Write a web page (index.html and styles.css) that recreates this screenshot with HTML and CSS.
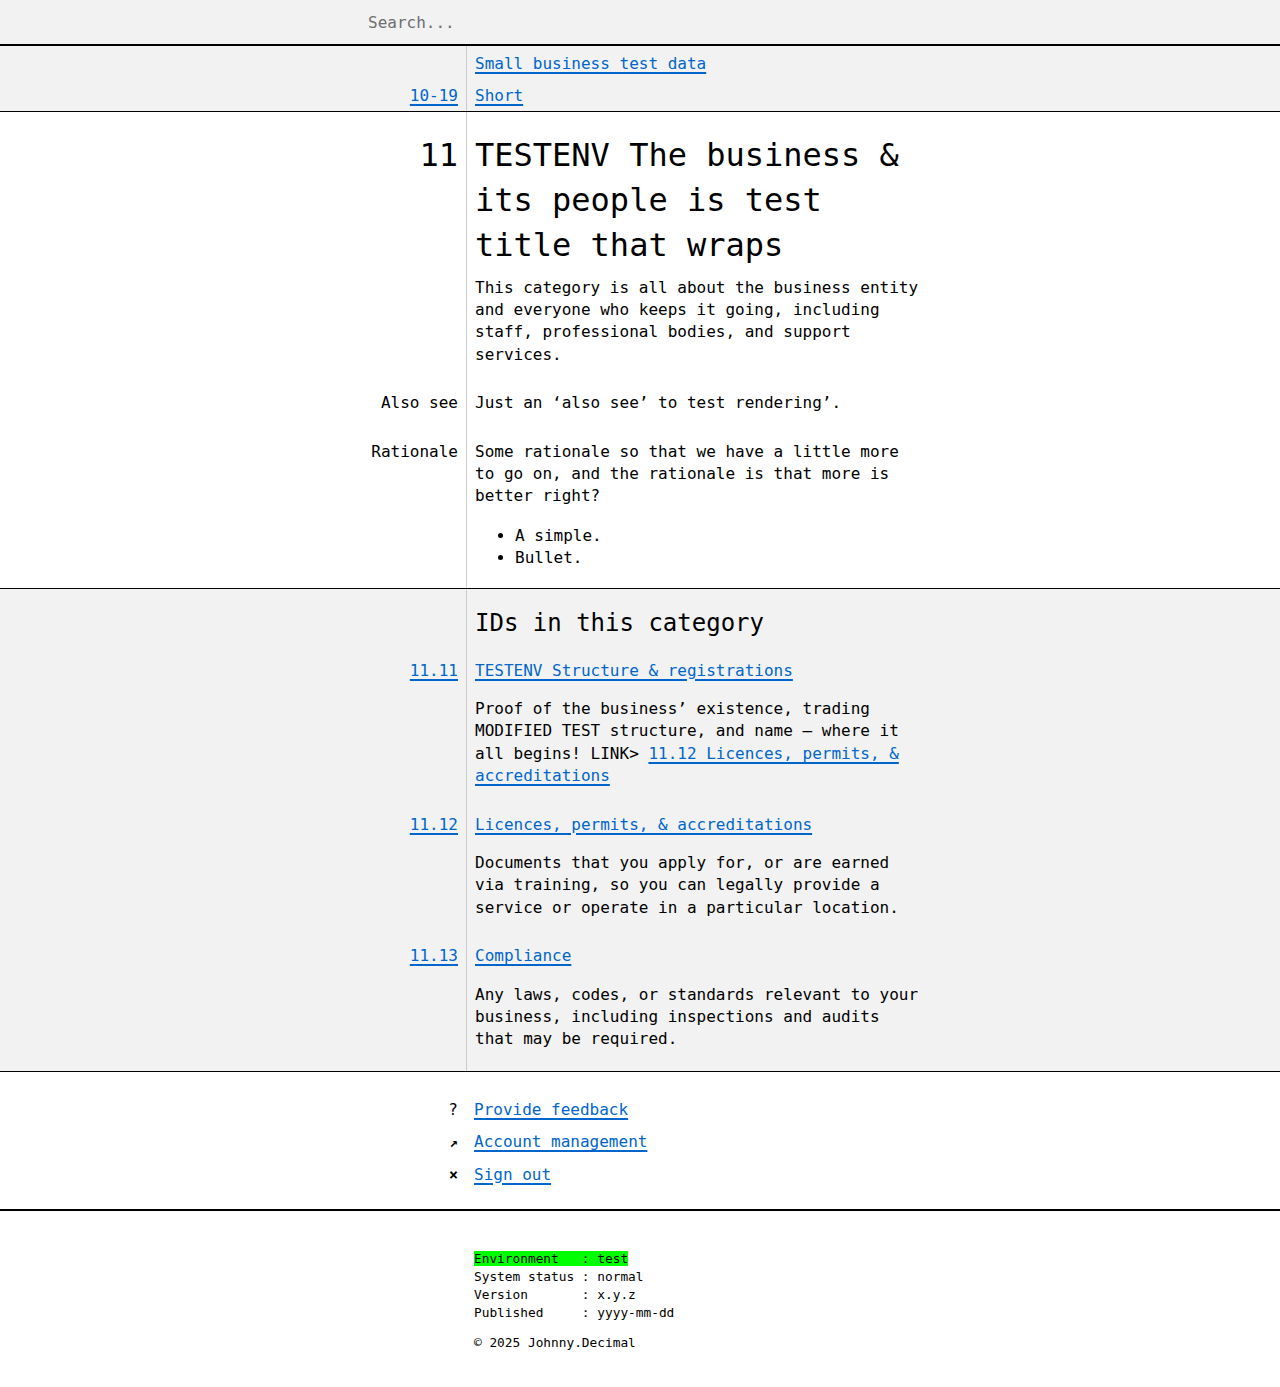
FILE: index.html
```html
<!DOCTYPE html>
<html lang="en">
<head>
<meta charset="utf-8">
<title>11 TESTENV The business &amp; its people</title>
<link rel="stylesheet" href="styles.css">
</head>
<body>
<header class="search">
  <input class="search-input" type="text" placeholder="Search...">
</header>

<nav class="crumbs">
  <div class="row crumb-row">
    <div class="key"></div>
    <div class="val"><a href="#">Small business test data</a></div>
  </div>
  <div class="row crumb-row">
    <div class="key"><a href="#">10-19</a></div>
    <div class="val"><a href="#">Short</a></div>
  </div>
</nav>

<main>
  <section class="category">
    <div class="row">
      <div class="key num-big">11</div>
      <div class="val">
        <h1 class="title">TESTENV The business &amp; its people is test title that wraps</h1>
        <p class="desc">This category is all about the business entity and everyone who keeps it going, including staff, professional bodies, and support services.</p>
      </div>
    </div>
    <div class="row meta-row">
      <div class="key">Also see</div>
      <div class="val"><p class="plain">Just an ‘also see’ to test rendering’.</p></div>
    </div>
    <div class="row meta-row">
      <div class="key">Rationale</div>
      <div class="val">
        <p class="plain">Some rationale so that we have a little more to go on, and the rationale is that more is better right?</p>
        <ul class="bullets">
          <li>A simple.</li>
          <li>Bullet.</li>
        </ul>
      </div>
    </div>
  </section>

  <section class="ids">
    <div class="row">
      <div class="key"></div>
      <div class="val"><h2 class="ids-title">IDs in this category</h2></div>
    </div>
    <div class="row id-row first">
      <div class="key"><a href="#">11.11</a></div>
      <div class="val">
        <a href="#">TESTENV Structure &amp; registrations</a>
        <p class="id-desc">Proof of the business’ existence, trading MODIFIED TEST structure, and name – where it all begins! LINK&gt; <a href="#">11.12 Licences, permits, &amp; accreditations</a></p>
      </div>
    </div>
    <div class="row id-row">
      <div class="key"><a href="#">11.12</a></div>
      <div class="val">
        <a href="#">Licences, permits, &amp; accreditations</a>
        <p class="id-desc">Documents that you apply for, or are earned via training, so you can legally provide a service or operate in a particular location.</p>
      </div>
    </div>
    <div class="row id-row">
      <div class="key"><a href="#">11.13</a></div>
      <div class="val">
        <a href="#">Compliance</a>
        <p class="id-desc">Any laws, codes, or standards relevant to your business, including inspections and audits that may be required.</p>
      </div>
    </div>
  </section>
</main>

<section class="actions">
  <div class="row action-row">
    <div class="key icon">?</div>
    <div class="val"><a href="#">Provide feedback</a></div>
  </div>
  <div class="row action-row">
    <div class="key icon"><span class="icon-arrow">↗</span></div>
    <div class="val"><a href="#">Account management</a></div>
  </div>
  <div class="row action-row">
    <div class="key icon"><span class="icon-x">×</span></div>
    <div class="val"><a href="#">Sign out</a></div>
  </div>
</section>

<footer class="site-footer">
  <div class="row">
    <div class="key"></div>
    <div class="val">
<pre class="status"><span class="env">Environment   : test</span>
System status : normal
Version       : x.y.z
Published     : yyyy-mm-dd</pre>
      <p class="copy">© 2025 Johnny.Decimal</p>
    </div>
  </div>
</footer>
</body>
</html>
```

FILE: styles.css
```css
html, body {
  margin: 0;
  padding: 0;
}

body {
  font-family: "DejaVu Sans Mono", "Liberation Mono", monospace;
  font-size: 16px;
  line-height: 1.4;
  color: #000;
  background: #fff;
}

a {
  color: #0066cc;
  text-decoration: underline;
  text-decoration-thickness: 2px;
  text-underline-offset: 3px;
}

/* two-column rows */
.row {
  display: grid;
  grid-template-columns: 466px 459px;
}

.key {
  padding-right: 8px;
  text-align: right;
}

.val {
  padding-left: 9px;
}

/* search */
.search {
  height: 44px;
  background: #f2f2f2;
  border-bottom: 2px solid #000;
  display: flex;
  align-items: center;
  padding-left: 360px;
}

.search-input {
  font-family: inherit;
  font-size: 16px;
  border: none;
  background: transparent;
  padding: 0 8px;
  width: 400px;
  outline: none;
  color: #000;
}

.search-input::placeholder {
  color: #6e6e6e;
}

/* breadcrumbs */
.crumbs {
  background: #f2f2f2 linear-gradient(to right, transparent 466px, #ccc 466px, #ccc 467px, transparent 467px);
  border-bottom: 1px solid #000;
  padding: 6.5px 0 3px;
}

.crumb-row + .crumb-row {
  margin-top: 10.5px;
}

/* category */
.category {
  background: #fff linear-gradient(to right, transparent 466px, #ccc 466px, #ccc 467px, transparent 467px);
  border-bottom: 1px solid #000;
  padding: 21.5px 0 18.5px;
}

.num-big,
.title {
  font-size: 32px;
  line-height: 1.4;
  font-weight: normal;
}

.title {
  margin: 0;
}

.desc {
  margin: 9px 0 0;
}

.meta-row {
  margin-top: 26px;
}

.plain {
  margin: 0;
}

.bullets {
  margin: 17px 0 0;
  padding-left: 40px;
}

/* ids */
.ids {
  background: #f2f2f2 linear-gradient(to right, transparent 466px, #ccc 466px, #ccc 467px, transparent 467px);
  border-bottom: 1px solid #000;
  padding: 18px 0 20px;
}

.ids-title {
  margin: 0;
  font-size: 24px;
  line-height: 1.4;
  font-weight: normal;
}

.id-row {
  margin-top: 26px;
}

.id-row.first {
  margin-top: 19px;
}

.id-desc {
  margin: 16px 0 0;
}

/* actions */
.actions {
  border-bottom: 2px solid #000;
  padding: 27px 0 23px;
}

.action-row + .action-row {
  margin-top: 10px;
}

.actions .val {
  padding-left: 8px;
}

.icon {
  font-size: 16px;
}

.icon-arrow {
  font-size: 14px;
  font-weight: bold;
}

.icon-x {
  font-size: 15px;
  font-weight: bold;
}

/* footer */
.site-footer {
  padding: 39px 0 28px;
}

.site-footer .val {
  padding-left: 8px;
}

.status {
  margin: 0;
  font-family: inherit;
  font-size: 12.8px;
  line-height: 1.4;
}

.env {
  background: #00ff00;
}

.copy {
  margin: 12px 0 0;
  font-size: 12.8px;
  line-height: 1.4;
}
```
